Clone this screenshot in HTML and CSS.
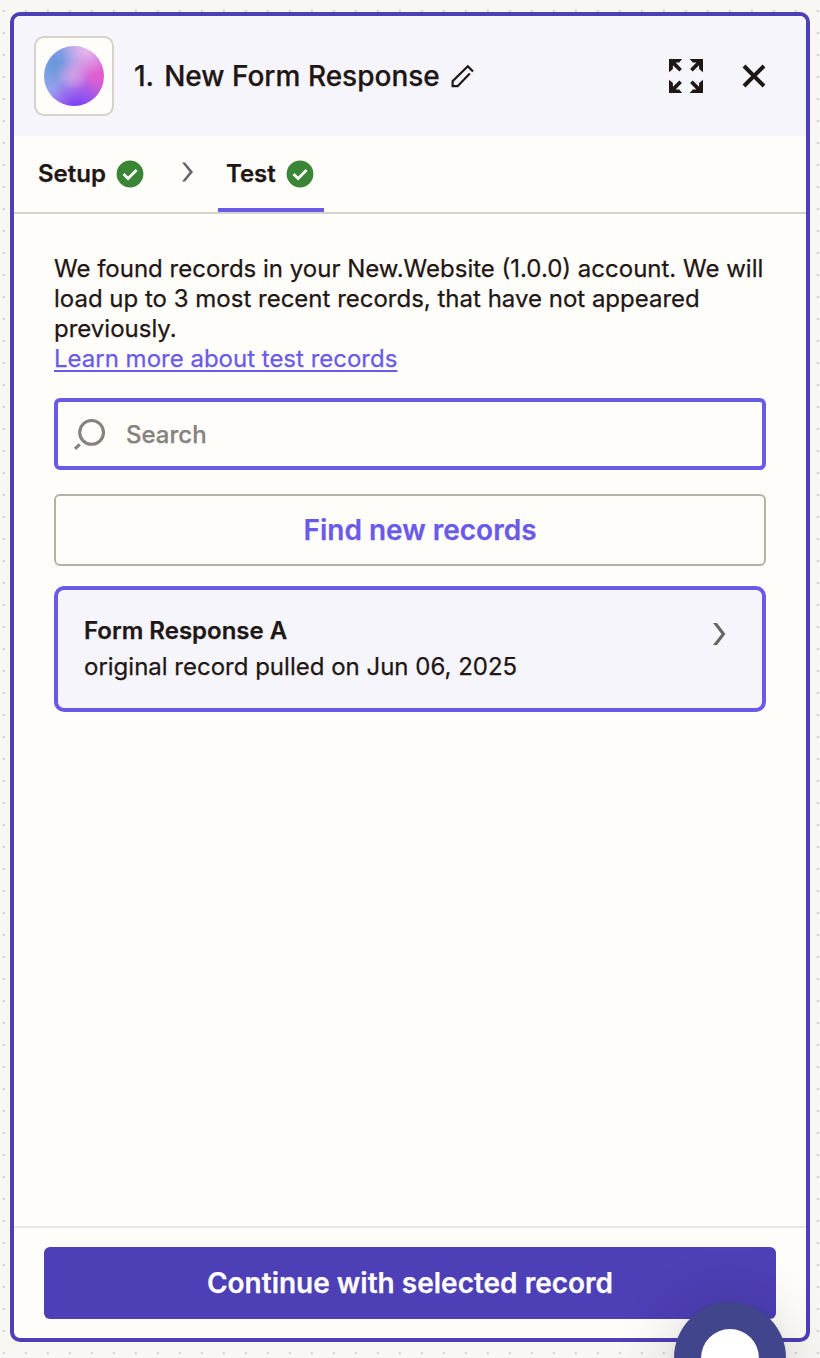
FILE: index.html
```html
<!DOCTYPE html>
<html lang="en">
<head>
<meta charset="utf-8">
<title>New Form Response</title>
<link rel="stylesheet" href="styles.css">
</head>
<body>
<main class="panel">
  <header class="header">
    <div class="app-icon"><div class="orb"></div></div>
    <h1 class="title"><span class="step">1.</span><span class="name">New Form Response</span></h1>
    <svg class="pencil" width="24" height="24" viewBox="0 0 24 24" fill="none" stroke="#1f1715" stroke-width="2.2"><path d="M22 7.6 16.8 2.2 1.6 17.2V22.2H6.6L18.8 9.4"/></svg>
    <svg class="expand" width="34" height="34" viewBox="0 0 34 34" fill="#1f1715">
      <g id="arrow"><path d="M0 0H13.2L10.2 3.6H6.6L12.9 9.9 10.3 12.6 3.9 6.2V10L0 13.2Z"/></g>
      <use href="#arrow" transform="translate(34 0) scale(-1 1)"/>
      <use href="#arrow" transform="translate(0 34) scale(1 -1)"/>
      <use href="#arrow" transform="translate(34 34) scale(-1 -1)"/>
    </svg>
    <svg class="close" width="24" height="24" viewBox="0 0 24 24" fill="none" stroke="#1f1715" stroke-width="4"><path d="M2 2 22 22M22 2 2 22"/></svg>
  </header>
  <nav class="tabs">
    <div class="tab"><span class="tab-label">Setup</span>
      <svg width="28" height="28" viewBox="0 0 28 28"><circle cx="14" cy="14" r="13.4" fill="#3b8636"/><path d="M7.5 14.1 12.1 18.5 20.6 10" fill="none" stroke="#fffdf9" stroke-width="2.7"/></svg>
    </div>
    <svg class="crumb" width="12" height="20" viewBox="0 0 12 20" fill="#666"><path d="M0 .4H3.1L11 9.9 3.1 19.4H0L7.6 9.9Z"/></svg>
    <div class="tab active"><span class="tab-label">Test</span>
      <svg width="28" height="28" viewBox="0 0 28 28"><circle cx="14" cy="14" r="13.4" fill="#3b8636"/><path d="M7.5 14.1 12.1 18.5 20.6 10" fill="none" stroke="#fffdf9" stroke-width="2.7"/></svg>
    </div>
  </nav>
  <section class="content">
    <p class="intro">We found records in your New.Website (1.0.0) account. We will load up to 3 most recent records, that have not appeared previously.<br><a class="link">Learn more about test records</a></p>
    <div class="search">
      <svg width="32" height="32" viewBox="0 0 32 32" fill="none" stroke="#88827f"><circle cx="17.6" cy="14.4" r="11.9" stroke-width="3.1"/><path d="M1 30.8 5.8 26.3" stroke-width="3.2"/></svg>
      <span>Search</span>
    </div>
    <div class="find">Find new records</div>
    <article class="record">
      <div>
        <div class="record-name">Form Response A</div>
        <div class="record-meta">original record pulled on Jun 06, 2025</div>
      </div>
      <svg class="record-arrow" width="13" height="22" viewBox="0 0 13 22" fill="#666"><path d="M0 0H4L12.4 11 4 22H0L8.5 11Z"/></svg>
    </article>
  </section>
  <footer class="footer"><div class="continue">Continue with selected record</div></footer>
</main>
<div class="chat"><div class="bubble"></div></div>
</body>
</html>
```
FILE: styles.css
```css
* { box-sizing: border-box; }
body {
  margin: 0;
  height: 1358px;
  padding: 12px 10px 16px;
  overflow: hidden;
  position: relative;
  font-family: Inter, sans-serif;
  color: #1f1715;
  -webkit-text-stroke: 0.25px;
  background-color: #f8f7f4;
  background-image: radial-gradient(circle at 11px 11px, #d2d0ca 1px, transparent 1.6px);
  background-size: 22px 22px;
  background-position: -7.2px 0;
}
.panel {
  height: 1330px;
  display: flex;
  flex-direction: column;
  border: 4px solid #4d3fb5;
  border-radius: 10px;
  background: #fffdf9;
  overflow: hidden;
}
.header {
  height: 120px;
  flex: none;
  display: flex;
  align-items: center;
  padding: 0 40px 0 20px;
  background: #f6f5fc;
}
.app-icon {
  width: 80px;
  height: 80px;
  display: grid;
  place-items: center;
  border: 2px solid #d4d2ca;
  border-radius: 10px;
  background: #fffdf9;
}
.orb {
  width: 60px;
  height: 60px;
  border-radius: 50%;
  background:
    radial-gradient(circle at 72% 6%, rgba(240, 190, 236, .9), transparent 38%),
    radial-gradient(circle at 48% 48%, rgba(216, 160, 232, .9), transparent 36%),
    radial-gradient(circle at 55% 106%, #8044f2 8%, transparent 46%),
    radial-gradient(circle at 90% 48%, rgba(226, 92, 206, .95) 4%, transparent 48%),
    radial-gradient(circle at 18% 28%, #6c98dc 4%, transparent 46%),
    linear-gradient(100deg, #86aef2, #b496ea 50%, #b84cdc);
}
.title {
  display: flex;
  gap: 10px;
  margin: 0 0 0 20px;
  font-size: 28px;
  line-height: 36px;
  font-weight: 500;
  white-space: nowrap;
}
.pencil { margin-left: 11px; }
.expand { margin-left: auto; }
.close { margin-left: 39px; }
.tabs {
  height: 78px;
  flex: none;
  display: flex;
  padding-left: 16px;
  border-bottom: 2px solid #d4d2ca;
}
.tab {
  display: flex;
  align-items: center;
  gap: 10px;
  height: 76px;
  padding: 0 10px 0 8px;
  font-size: 24px;
  font-weight: 600;
}
.tab-label { padding-bottom: 2px; }
.active { box-shadow: inset 0 -4px #695be8; }
.crumb { margin: 26px 24px 0 28px; }
.content { flex: 1; padding: 40px; }
.intro {
  margin: 0;
  font-size: 24px;
  line-height: 30px;
}
.link {
  color: #695be8;
  text-decoration: underline;
  text-decoration-thickness: 2px;
  text-underline-offset: 3px;
}
.search {
  height: 72px;
  margin-top: 24px;
  padding-left: 16px;
  display: flex;
  align-items: center;
  gap: 20px;
  border: 4px solid #695be8;
  border-radius: 6px;
  color: #88827f;
  font-size: 24px;
  font-weight: 500;
}
.find {
  height: 72px;
  margin-top: 24px;
  display: grid;
  place-items: center;
  border: 2px solid #b3b2aa;
  border-radius: 6px;
  padding-left: 20px;
  color: #695be8;
  font-size: 28px;
  font-weight: 600;
}
.record {
  height: 126px;
  margin-top: 20px;
  padding: 23px 36px 0 26px;
  display: flex;
  justify-content: space-between;
  border: 4px solid #695be8;
  border-radius: 10px;
  background: #f6f5fc;
  font-size: 24px;
  line-height: 36px;
}
.record-name { font-weight: 600; }
.record-arrow { margin-top: 10px; }
.footer {
  height: 112px;
  flex: none;
  padding: 19px 30px;
  border-top: 2px solid #e8e7e4;
}
.continue {
  height: 72px;
  display: grid;
  place-items: center;
  border-radius: 6px;
  background: #4d3fb5;
  color: #fffdf9;
  font-size: 28px;
  font-weight: 600;
}
.chat {
  position: absolute;
  left: 674px;
  top: 1302px;
  width: 112px;
  height: 112px;
  border-radius: 50%;
  background: #40458c;
  box-shadow: 0 2px 12px rgba(0, 0, 0, .06), 0 4px 64px rgba(0, 0, 0, .16);
  display: flex;
  justify-content: center;
  padding-top: 27px;
}
.bubble {
  width: 58px;
  height: 58px;
  border-radius: 50%;
  background: #fff;
}
```
